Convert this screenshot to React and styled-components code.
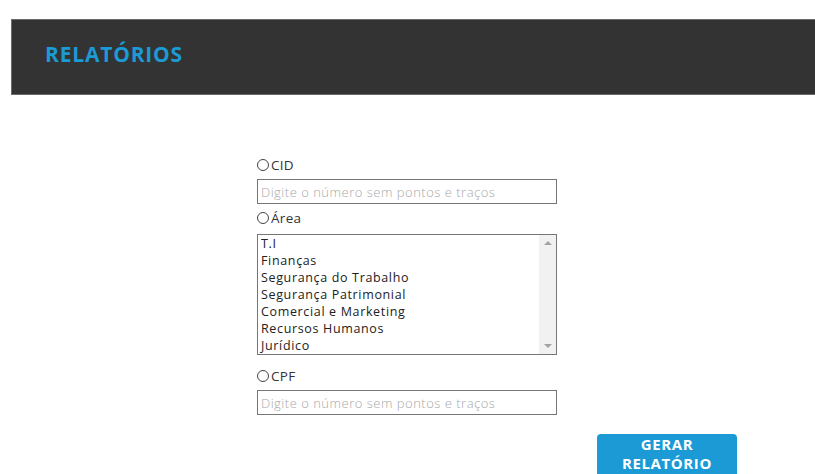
import React from 'react';
import styled, { createGlobalStyle } from 'styled-components';

const GlobalStyle = createGlobalStyle`
  html, body {
    margin: 0;
    padding: 0;
    background: #fff;
    overflow: hidden;
  }
  body {
    font-family: "Open Sans", "Liberation Sans", sans-serif;
    color: #333;
  }
`;

const Page = styled.div`
  width: 815px;
  height: 474px;
  padding: 19px 0 0 11px;
  box-sizing: border-box;
  overflow: hidden;
`;

const Header = styled.header`
  height: 76px;
  background: #333333;
  border: 1px solid #6b6b6b;
  border-right: none;
  box-sizing: border-box;
  display: flex;
  align-items: center;
  padding: 0 0 7px 33px;
`;

const Title = styled.h1`
  margin: 0;
  font-size: 21px;
  font-weight: 700;
  color: #1b9ad6;
  letter-spacing: 0.8px;
`;

const Form = styled.form`
  width: 300px;
  margin: 62px 0 0 246px;
  display: flex;
  flex-direction: column;
`;

const RadioLabel = styled.label`
  display: flex;
  align-items: center;
  height: 16px;
  font-size: 13.5px;
  letter-spacing: 0.3px;
  color: #333;
  margin-bottom: ${p => p.$gap || 6}px;
  cursor: pointer;
`;

const RadioDot = styled.span`
  width: 10px;
  height: 10px;
  border: 1px solid #444;
  border-radius: 50%;
  margin-right: 2px;
  flex: none;
`;

const TextInput = styled.input`
  width: 300px;
  height: 25px;
  box-sizing: border-box;
  border: 1px solid #767676;
  padding: 0 3px;
  font-family: inherit;
  font-size: 13px;
  letter-spacing: 0.5px;
  font-weight: 300;
  margin-bottom: ${p => p.$gap || 0}px;
  outline: none;
  &::placeholder {
    color: #a9a9a9;
    font-weight: 300;
  }
`;

const ListBox = styled.div`
  width: 300px;
  height: 121px;
  box-sizing: border-box;
  border: 1px solid #767676;
  display: flex;
  margin-bottom: 13px;
`;

const Options = styled.ul`
  flex: 1;
  list-style: none;
  margin: 0;
  padding: 0 0 0 3px;
`;

const Option = styled.li`
  height: 17px;
  line-height: 17px;
  font-size: 12.5px;
  letter-spacing: 0.65px;
  color: #222;
  white-space: nowrap;
`;

const Scrollbar = styled.div`
  width: 17px;
  background: #f1f1f1;
  display: flex;
  flex-direction: column;
  justify-content: space-between;
  align-items: center;
  padding: 6px 0;
  box-sizing: border-box;
`;

const Arrow = styled.span`
  width: 0;
  height: 0;
  border-left: 4px solid transparent;
  border-right: 4px solid transparent;
  ${p => (p.$up
    ? 'border-bottom: 4px solid #a3a3a3;'
    : 'border-top: 4px solid #a3a3a3;')}
`;

const Actions = styled.div`
  display: flex;
  justify-content: flex-end;
  margin: 19px -180px 0 0;
`;

const Button = styled.button`
  width: 140px;
  height: 48px;
  border: none;
  border-radius: 4px;
  background: #1b9ad6;
  color: #fff;
  font-family: inherit;
  font-weight: 700;
  font-size: 15px;
  letter-spacing: 0.6px;
  line-height: 19px;
  padding: 1px 0 0;
  display: flex;
  flex-direction: column;
  align-items: center;
  justify-content: flex-start;
  cursor: pointer;
`;

const areas = [
  'T.I',
  'Finanças',
  'Segurança do Trabalho',
  'Segurança Patrimonial',
  'Comercial e Marketing',
  'Recursos Humanos',
  'Jurídico',
];

const App = () => {
  return (
    <>
      <GlobalStyle />
      <Page>
        <Header>
          <Title>RELATÓRIOS</Title>
        </Header>
        <Form onSubmit={e => e.preventDefault()}>
          <RadioLabel>
            <RadioDot />
            CID
          </RadioLabel>
          <TextInput placeholder="Digite o número sem pontos e traços" $gap={6} />
          <RadioLabel $gap={8}>
            <RadioDot />
            Área
          </RadioLabel>
          <ListBox role="listbox">
            <Options>
              {areas.map(area => (
                <Option key={area}>{area}</Option>
              ))}
            </Options>
            <Scrollbar>
              <Arrow $up />
              <Arrow />
            </Scrollbar>
          </ListBox>
          <RadioLabel>
            <RadioDot />
            CPF
          </RadioLabel>
          <TextInput placeholder="Digite o número sem pontos e traços" />
          <Actions>
            <Button type="submit">
              <span>GERAR</span>
              <span>RELATÓRIO</span>
            </Button>
          </Actions>
        </Form>
      </Page>
    </>
  );
};

export default App;
